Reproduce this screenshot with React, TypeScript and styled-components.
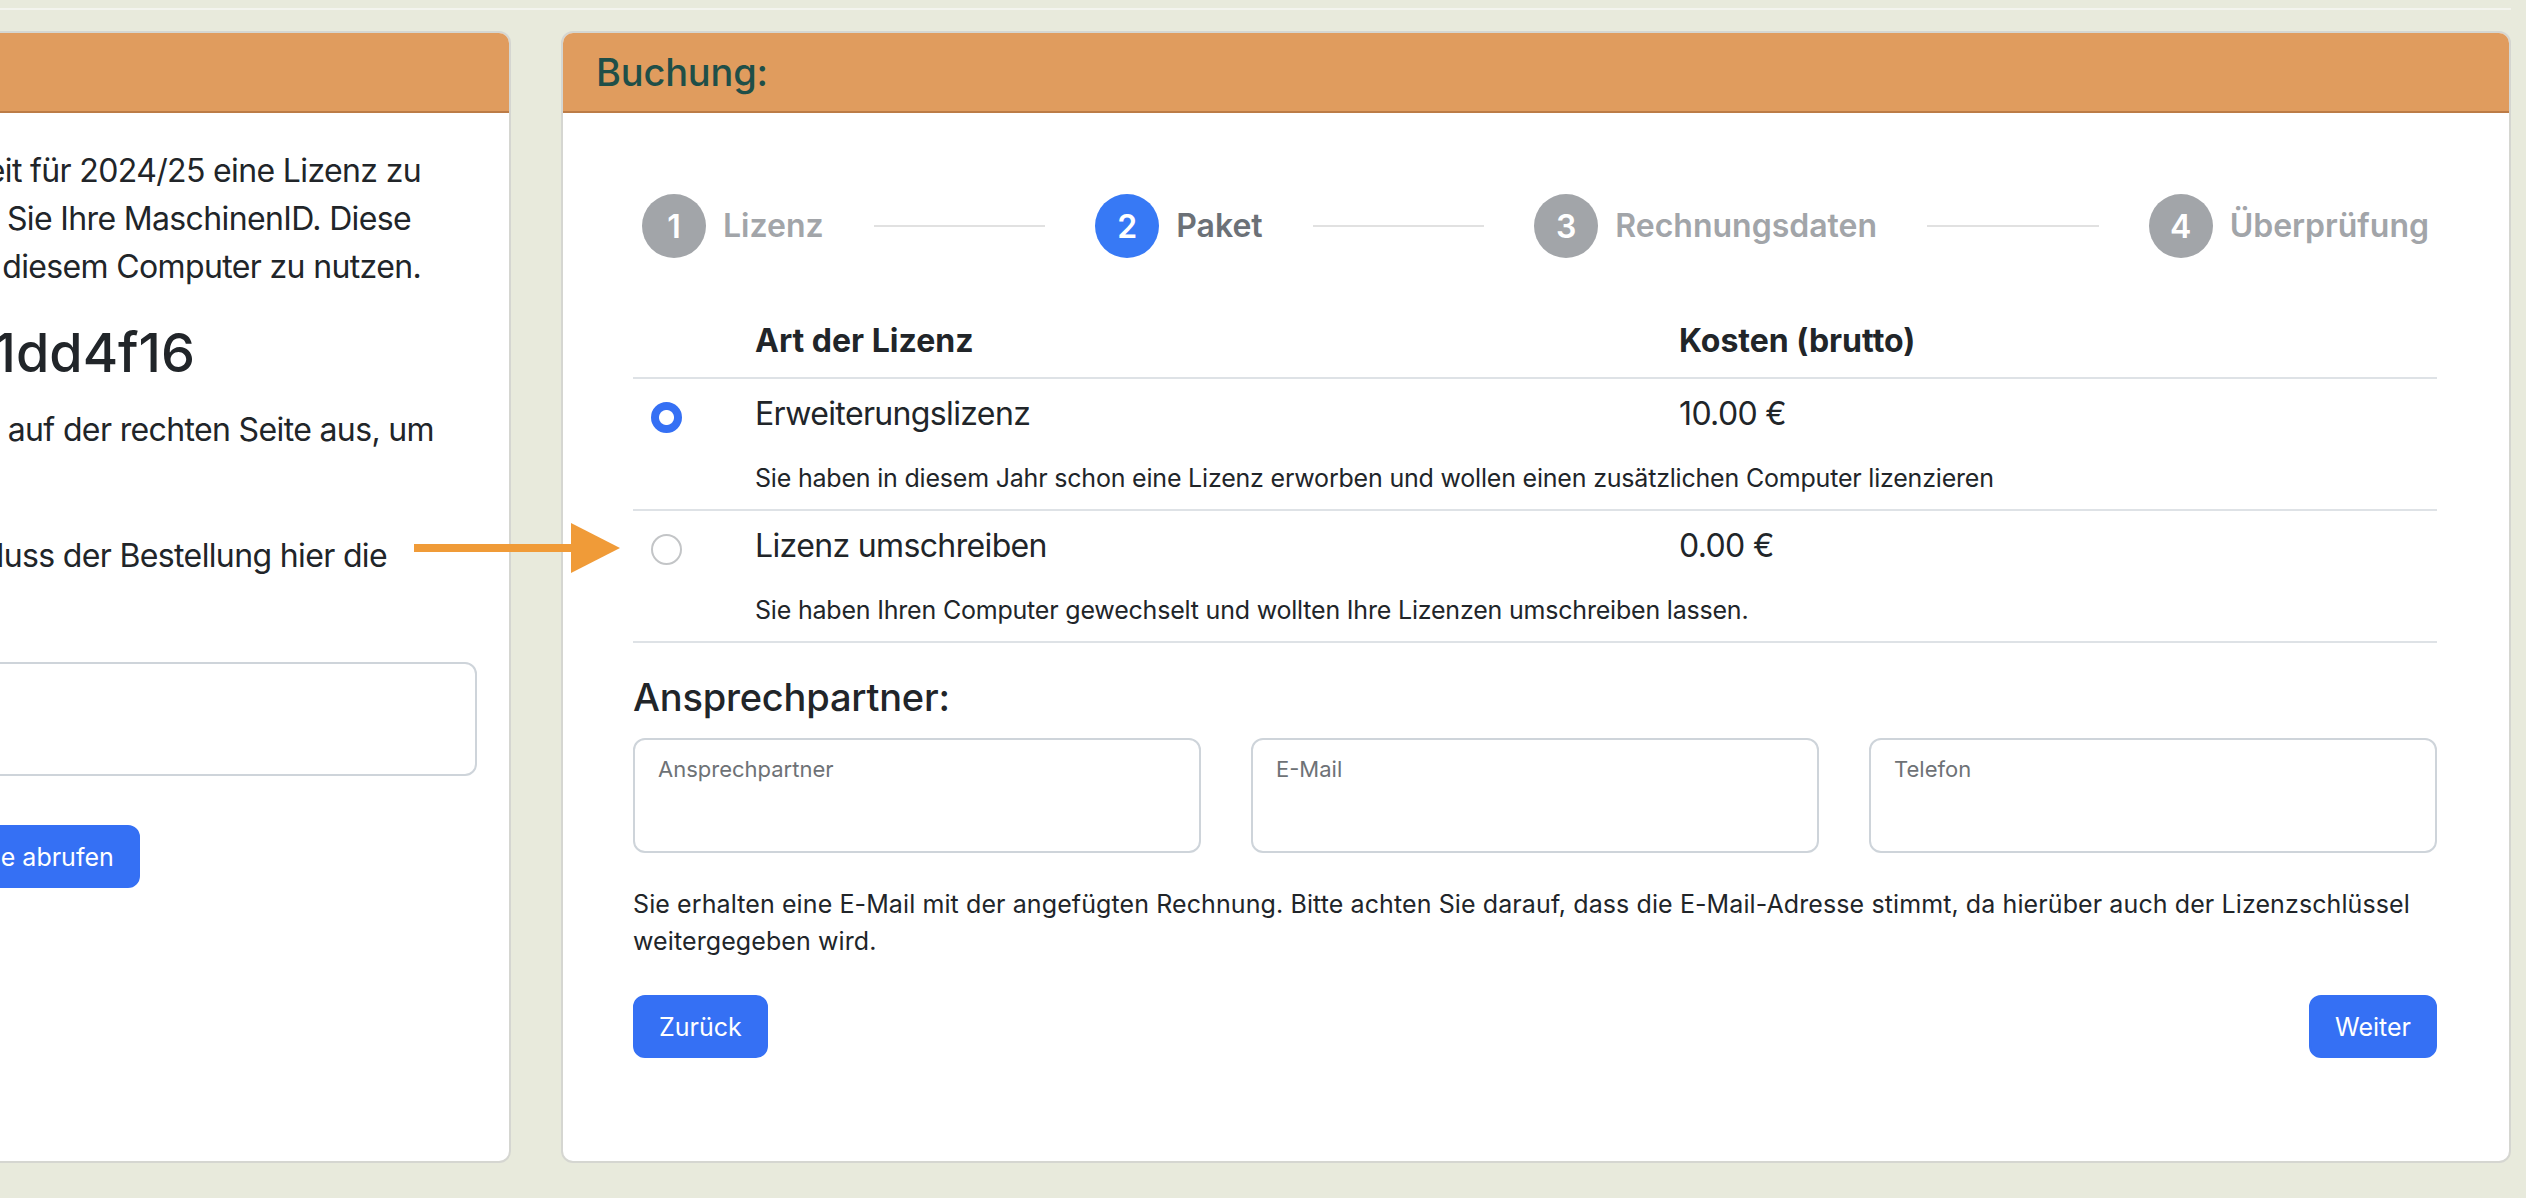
import React from 'react';
import styled, { createGlobalStyle } from 'styled-components';

const GlobalStyle = createGlobalStyle`
  *, *::before, *::after { box-sizing: border-box; }
  html, body { margin: 0; padding: 0; }
  body {
    background: #e8eadc;
    color: #212529;
    font-family: Inter, "Noto Sans", "Liberation Sans", sans-serif;
  }
`;

const BLUE = '#3570f4';

const Page = styled.div`
  position: relative;
  width: 2526px;
  height: 1198px;
  overflow: hidden;
`;

const TopRule = styled.div`
  width: 2511px;
  height: 10px;
  border-bottom: 2px solid #f3f4ee;
`;

// the left column starts outside the visible area of the screenshot
const Columns = styled.main`
  display: grid;
  grid-template-columns: 865px 1950px;
  column-gap: 50px;
  height: 1132px;
  margin: 21px 0 0 -354px;
`;

const Card = styled.section`
  display: flex;
  flex-direction: column;
  background: #fff;
  border: 2px solid #d5d6d1;
  border-radius: 12px;
  overflow: hidden;
`;

const CardHeader = styled.header`
  background: #e09c5e;
  border-bottom: 2px solid #bc7c47;
  padding: 15px 33px;
  font-size: 38px;
  line-height: 48px;
  font-weight: 500;
  letter-spacing: -0.2px;
  color: #1f4f48;
`;

const LeftBody = styled.div`
  padding: 34px 32px 0;
`;

const Para = styled.p<{ $gap?: number }>`
  margin: 0 0 ${p => p.$gap ?? 0}px;
  font-size: 32px;
  line-height: 48px;
  letter-spacing: -0.02em;
`;

const Line = styled.span<{ $inset?: number }>`
  display: flex;
  justify-content: ${p => (p.$inset === undefined ? 'flex-start' : 'flex-end')};
  padding-right: ${p => p.$inset ?? 0}px;
  white-space: nowrap;
`;

const MachineId = styled.h3`
  display: flex;
  justify-content: flex-end;
  margin: 29px 0 21px;
  padding-right: 282px;
  font-size: 54px;
  line-height: 65px;
  font-weight: 500;
  white-space: nowrap;
`;

const LicenseBox = styled.textarea`
  display: block;
  width: 100%;
  height: 114px;
  margin: 34px 0 49px;
  border: 2px solid #ced4da;
  border-radius: 12px;
  resize: none;
  background: #fff;
`;

const Button = styled.button`
  height: 63px;
  padding: 0 24px;
  border: 2px solid ${BLUE};
  border-radius: 12px;
  background: ${BLUE};
  color: #fff;
  font-family: inherit;
  font-size: 25px;
  white-space: nowrap;
  cursor: pointer;
`;

const Arrow = styled.svg`
  position: absolute;
  left: 414px;
  top: 520px;
  width: 208px;
  height: 56px;
`;

const RightBody = styled.div`
  padding: 81px 72px 0 70px;
`;

const Stepper = styled.ol`
  display: flex;
  align-items: center;
  height: 64px;
  margin: 0;
  padding: 0 8px 0 9px;
  list-style: none;
`;

const Step = styled.li`
  display: flex;
  align-items: center;
  gap: 17px;
`;

const StepNumber = styled.span<{ $active: boolean }>`
  display: flex;
  align-items: center;
  justify-content: center;
  width: 64px;
  height: 64px;
  border-radius: 50%;
  background: ${p => (p.$active ? '#3779f5' : '#a2a5a9')};
  color: #fff;
  font-size: 32px;
  font-weight: 600;
`;

const StepLabel = styled.span<{ $active: boolean }>`
  font-size: 32px;
  line-height: 48px;
  font-weight: 600;
  color: ${p => (p.$active ? '#6c7177' : '#a2a5a9')};
  white-space: nowrap;
`;

const Connector = styled.li`
  flex: 1;
  height: 2px;
  margin: 0 50px;
  background: #e1e1e1;
`;

const Table = styled.div`
  margin-top: 48px;
`;

const HeadRow = styled.div`
  display: grid;
  grid-template-columns: 122px 924px 1fr;
  padding: 11px 0 12px;
  border-bottom: 2px solid #dee2e6;
  font-size: 32px;
  line-height: 48px;
  font-weight: 700;
`;

const OptionRow = styled.label`
  display: grid;
  grid-template-columns: 122px 924px 1fr;
  row-gap: 19px;
  padding: 11px 0 10px;
  border-bottom: 2px solid #dee2e6;
  font-size: 32px;
  line-height: 48px;
  letter-spacing: -0.02em;
  cursor: pointer;
`;

const Radio = styled.input.attrs({ type: 'radio' })`
  appearance: none;
  width: 31px;
  height: 31px;
  margin: 12px 0 0 18px;
  border: 2px solid #c3c5c7;
  border-radius: 50%;
  background: #fff;

  &:checked {
    border-color: ${BLUE};
    background: radial-gradient(circle, #fff 0 7px, ${BLUE} 8px);
  }
`;

const Description = styled.span`
  grid-column: 2 / 4;
  font-size: 25px;
  line-height: 42px;
  letter-spacing: -0.2px;
`;

const SectionTitle = styled.h5`
  margin: 30px 0 0;
  font-size: 38px;
  line-height: 48px;
  font-weight: 500;
  letter-spacing: -0.2px;
`;

const FieldGrid = styled.div`
  display: grid;
  grid-template-columns: repeat(3, 1fr);
  column-gap: 50px;
  margin-top: 17px;
`;

const Field = styled.label`
  display: flex;
  flex-direction: column;
  height: 115px;
  padding: 17px 23px 0;
  border: 2px solid #ced4da;
  border-radius: 12px;
`;

const FieldLabel = styled.span`
  font-size: 22px;
  line-height: 24px;
  color: #6e7276;
`;

const FieldInput = styled.input`
  margin-top: 10px;
  padding: 0;
  border: none;
  outline: none;
  background: transparent;
  font-family: inherit;
  font-size: 28px;
`;

const Note = styled.p`
  margin: 33px 0 0;
  font-size: 25px;
  line-height: 37px;
  letter-spacing: 0.1px;
`;

const Actions = styled.div`
  display: flex;
  justify-content: space-between;
  margin-top: 35px;
`;

const steps = ['Lizenz', 'Paket', 'Rechnungsdaten', 'Überprüfung'];
const activeStep = 1;

const options = [
  {
    id: 'erweiterung',
    name: 'Erweiterungslizenz',
    price: '10.00 €',
    text: 'Sie haben in diesem Jahr schon eine Lizenz erworben und wollen einen zusätzlichen Computer lizenzieren',
  },
  {
    id: 'umschreiben',
    name: 'Lizenz umschreiben',
    price: '0.00 €',
    text: 'Sie haben Ihren Computer gewechselt und wollten Ihre Lizenzen umschreiben lassen.',
  },
];

export default function App() {
  return (
    <Page>
      <GlobalStyle />
      <TopRule />
      <Columns>
        <Card>
          <CardHeader>Lizenz:</CardHeader>
          <LeftBody>
            <Para>
              <Line $inset={56}>Sie haben die Möglichkeit für 2024/25 eine Lizenz zu</Line>
              <Line $inset={66}>erwerben. Dazu benötigen Sie Ihre MaschinenID. Diese</Line>
              <Line $inset={56}>ermöglicht es Ihnen, die Software auf diesem Computer zu nutzen.</Line>
            </Para>
            <MachineId>MaschinenID: 7c41dd4f16</MachineId>
            <Para $gap={30}>
              <Line $inset={43}>Wählen Sie ein Paket auf der rechten Seite aus, um</Line>
              <Line>abzuschließen.</Line>
            </Para>
            <Para>
              <Line $inset={90}>Sie können nach Abschluss der Bestellung hier die</Line>
              <Line>Lizenz abrufen.</Line>
            </Para>
            <LicenseBox readOnly />
            <Button>Lizenz für diese Maschine abrufen</Button>
          </LeftBody>
        </Card>

        <Card>
          <CardHeader>Buchung:</CardHeader>
          <RightBody>
            <Stepper>
              {steps.map((label, i) => (
                <React.Fragment key={label}>
                  {i > 0 && <Connector />}
                  <Step>
                    <StepNumber $active={i === activeStep}>{i + 1}</StepNumber>
                    <StepLabel $active={i === activeStep}>{label}</StepLabel>
                  </Step>
                </React.Fragment>
              ))}
            </Stepper>

            <Table>
              <HeadRow>
                <span />
                <span>Art der Lizenz</span>
                <span>Kosten (brutto)</span>
              </HeadRow>
              {options.map((o, i) => (
                <OptionRow key={o.id}>
                  <Radio name="paket" value={o.id} defaultChecked={i === 0} />
                  <span>{o.name}</span>
                  <span>{o.price}</span>
                  <Description>{o.text}</Description>
                </OptionRow>
              ))}
            </Table>

            <SectionTitle>Ansprechpartner:</SectionTitle>
            <FieldGrid>
              <Field>
                <FieldLabel>Ansprechpartner</FieldLabel>
                <FieldInput />
              </Field>
              <Field>
                <FieldLabel>E-Mail</FieldLabel>
                <FieldInput type="email" />
              </Field>
              <Field>
                <FieldLabel>Telefon</FieldLabel>
                <FieldInput type="tel" />
              </Field>
            </FieldGrid>

            <Note>
              Sie erhalten eine E-Mail mit der angefügten Rechnung. Bitte achten Sie darauf, dass die
              E-Mail-Adresse stimmt, da hierüber auch der Lizenzschlüssel weitergegeben wird.
            </Note>

            <Actions>
              <Button>Zurück</Button>
              <Button>Weiter</Button>
            </Actions>
          </RightBody>
        </Card>
      </Columns>

      <Arrow viewBox="0 0 208 56">
        <rect x="0" y="24" width="160" height="8" fill="#f09b38" />
        <polygon points="157,3 206,28 157,53" fill="#f09b38" />
      </Arrow>
    </Page>
  );
}
